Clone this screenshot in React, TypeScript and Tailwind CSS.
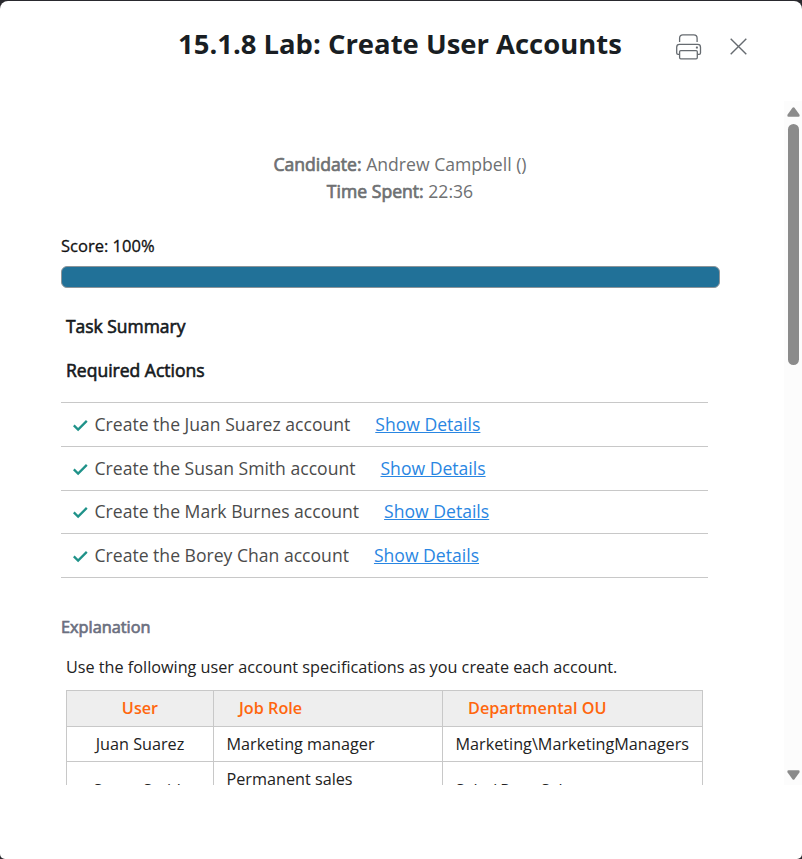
const tasks = [
  { name: "Juan Suarez", row: "h-[44px] pt-[8px]" },
  { name: "Susan Smith", row: "h-[44px] pt-[8px]" },
  { name: "Mark Burnes", row: "h-[43px] pt-[7px]" },
  { name: "Borey Chan", row: "h-[44px] pt-[8px]" },
];

function PrinterIcon() {
  return (
    <svg width="26" height="26" viewBox="0 0 26 26" fill="none" stroke="#666b70" strokeWidth="1.3">
      <path d="M3.6 8V4.2Q3.6.9 6.9.9H17.8Q21.1.9 21.1 4.2V8" />
      <path d="M3.6 20.3H2.1Q.7 20.3.7 18.9V13.2Q.7 10.4 3.5 10.4H21.7Q24.5 10.4 24.5 13.2V18.9Q24.5 20.3 23.1 20.3H21.3" />
      <rect x="3.6" y="16.6" width="17.7" height="8.2" rx="1.2" />
      <rect x="19.9" y="12.6" width="2" height="2" rx=".4" fill="#666b70" stroke="none" />
    </svg>
  );
}

function Scrollbar() {
  return (
    <div className="flex h-full w-[18px] shrink-0 flex-col items-center bg-[#fcfcfc]">
      <svg className="mt-[6px] shrink-0" width="13" height="10" viewBox="0 0 13 10" fill="#8b8b8b">
        <path d="M5.5.8Q6.5-.4 7.5.8L12.4 7.6Q13.2 9.7 11.4 9.7H1.6Q-.2 9.7.6 7.6Z" />
      </svg>
      <div className="mt-[7px] h-[241px] w-[11px] shrink-0 rounded-full bg-[#8b8b8b]" />
      <svg className="mt-auto mb-[5px] shrink-0" width="13" height="10" viewBox="0 0 13 10" fill="#8b8b8b">
        <path d="M5.5 9.2Q6.5 10.4 7.5 9.2L12.4 2.4Q13.2.3 11.4.3H1.6Q-.2.3.6 2.4Z" />
      </svg>
    </div>
  );
}

export default function App() {
  return (
    <div className="h-[859px] w-[802px] overflow-hidden bg-[#29292e] pt-px font-['Open_Sans','Noto_Sans',sans-serif]">
      <div className="flex h-[858px] flex-col rounded-t-[8px] rounded-b-[5px] bg-white">
        <header className="flex h-[100px] shrink-0 pl-[178px]">
          <h1 className="mt-[24px] w-[498px] text-[27.45px] leading-[38px] font-bold whitespace-nowrap text-[#191e23]">
            15.1.8 Lab: Create User Accounts
          </h1>
          <button className="mt-[33px] h-[26px]" aria-label="Print">
            <PrinterIcon />
          </button>
          <button className="mt-[37px] ml-[28px] h-[17px]" aria-label="Close">
            <svg width="17" height="17" viewBox="0 0 17 17" stroke="#666b70" strokeWidth="1.4">
              <path d="M.7.7 16.3 16.3M16.3.7.7 16.3" />
            </svg>
          </button>
        </header>

        <div className="flex h-[684px] shrink-0 overflow-hidden">
          <main className="w-[784px] shrink-0 pl-[61px]">
            <div className="mt-[50px] w-[678px] text-center text-[17.6px] leading-[27px] text-[#6e7072]">
              <p><span className="[-webkit-text-stroke:0.7px]">Candidate:</span> Andrew Campbell ()</p>
              <p><span className="[-webkit-text-stroke:0.7px]">Time Spent:</span> 22:36</p>
            </div>
            <p className="mt-[28px] text-[16.55px] leading-[26px] text-[#111] [-webkit-text-stroke:0.3px]">Score: 100%</p>
            <div className="mt-[7px] h-[22px] w-[659px] rounded-[6px] border border-[#8c9499] bg-[#217198]" />
            <h2 className="mt-[25px] ml-[5px] text-[17.45px] leading-[26px] text-[#15191d] [-webkit-text-stroke:0.6px]">Task Summary</h2>
            <h2 className="mt-[18px] ml-[5px] text-[17.55px] leading-[26px] text-[#15191d] [-webkit-text-stroke:0.6px]">Required Actions</h2>

            <ul className="mt-[19px] w-[647px] border-t border-[#c8c8c8] text-[17.58px] text-[#4b4b4b]">
              {tasks.map(({ name, row }) => (
                <li key={name} className={`flex items-start border-b border-[#c8c8c8] pl-[11.5px] leading-[26px] ${row}`}>
                  <svg className="mt-[9px] mr-[7px]" width="15" height="12" viewBox="0 0 15 12" fill="none" stroke="#1f9289" strokeWidth="2.3">
                    <path d="M.8 5.4 5.1 9.6 13.8.9" />
                  </svg>
                  <span>Create the {name} account</span>
                  <a href="#" className="ml-[25px] text-[#2986e2] underline decoration-1 underline-offset-1">Show Details</a>
                </li>
              ))}
            </ul>

            <h3 className="mt-[36px] text-[16.3px] leading-[26px] text-[#6b7080] [-webkit-text-stroke:0.7px]">Explanation</h3>
            <p className="mt-[14px] ml-[5px] text-[16.22px] leading-[26px] text-[#222]">
              Use the following user account specifications as you create each account.
            </p>
            <table className="mt-[10px] ml-[5px] w-[637px] table-fixed border-collapse text-[16.22px] leading-[24px] text-[#222]">
              <colgroup>
                <col className="w-[147px]" />
                <col className="w-[229px]" />
                <col className="w-[260px]" />
              </colgroup>
              <thead>
                <tr className="h-[36px] bg-[#eeeeee] text-left text-[#ff660d]">
                  <th className="border border-[#c8c8c8] p-0 pb-[2px] text-center font-semibold">User</th>
                  <th className="border border-[#c8c8c8] p-0 pb-[2px] pl-[25px] font-semibold">Job Role</th>
                  <th className="border border-[#c8c8c8] p-0 pb-[2px] pl-[25px] font-semibold">Departmental OU</th>
                </tr>
              </thead>
              <tbody>
                <tr className="h-[35px]">
                  <td className="border border-[#c8c8c8] p-0 text-center">Juan Suarez</td>
                  <td className="border border-[#c8c8c8] p-0 pl-[12.5px]">Marketing manager</td>
                  <td className="border border-[#c8c8c8] p-0 pl-[12.5px]">Marketing\MarketingManagers</td>
                </tr>
                <tr className="h-[57px] align-top">
                  <td className="border border-[#c8c8c8] p-0 pt-[16px] text-center">Susan Smith</td>
                  <td className="border border-[#c8c8c8] p-0 pt-[6px] pl-[12.5px] leading-[22px]">Permanent sales<br />employee</td>
                  <td className="border border-[#c8c8c8] p-0 pt-[16px] pl-[12.5px]">Sales\PermSales</td>
                </tr>
              </tbody>
            </table>
          </main>
          <Scrollbar />
        </div>
      </div>
    </div>
  );
}
